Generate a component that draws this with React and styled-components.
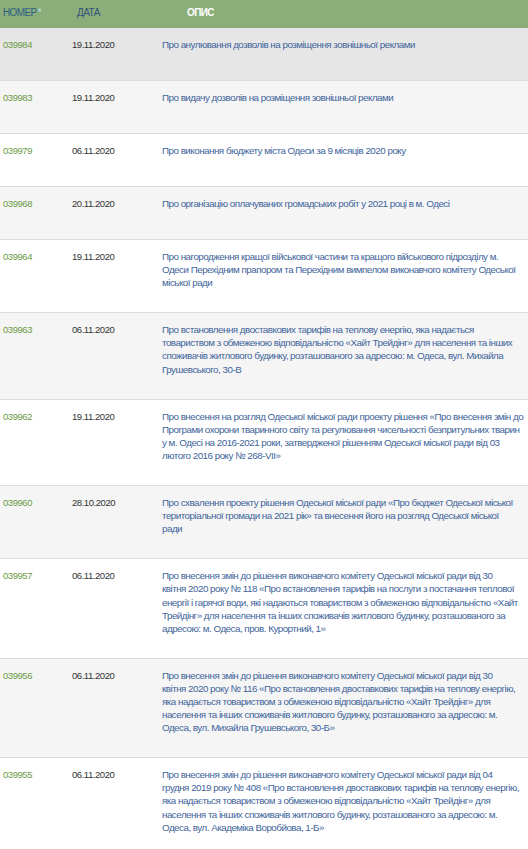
import React from "react";
import styled, { createGlobalStyle } from "styled-components";

const GlobalStyle = createGlobalStyle`
  body {
    margin: 0;
    background: #ffffff;
    font-family: "Liberation Sans", Arial, sans-serif;
  }
`;

const Table = styled.div`
  width: 528px;
  display: flex;
  flex-direction: column;
  overflow: hidden;
`;

const Head = styled.div`
  display: grid;
  grid-template-columns: 72px 90px 1fr;
  height: 28px;
  background-color: #8aad79;
  font-size: 10px;
  letter-spacing: -0.6px;
  line-height: 25px;
`;

const Th = styled.div`
  padding-left: ${(props) => props.pad || "3px"};
  color: ${(props) => props.color || "#2f5f84"};
  font-weight: ${(props) => (props.bold ? "bold" : "normal")};

  span {
    margin-left: 1px;
    color: #c4dcea;
  }
`;

const Row = styled.div`
  display: grid;
  grid-template-columns: 72px 90px 1fr;
  align-items: start;
  min-height: 53px;
  box-sizing: border-box;
  padding: 10px 0 23px;
  border-bottom: 1px solid #dcdcdc;
  background-color: ${(props) =>
    props.active ? "#e6e6e6" : props.odd ? "#f5f5f5" : "#ffffff"};
  line-height: 13.1px;
`;

const Num = styled.div`
  padding-left: 3px;
  font-size: 9.5px;
  letter-spacing: -0.45px;
  color: #6b9a46;
`;

const Date = styled.div`
  font-size: 9.5px;
  letter-spacing: -0.45px;
  color: #333333;
`;

const Desc = styled.div`
  font-size: 9.8px;
  letter-spacing: -0.5px;
  color: #41649a;
`;

const Line = styled.span`
  display: block;
  white-space: nowrap;
`;

const rows = [
  ["039984", "19.11.2020", ["Про анулювання дозволів на розміщення зовнішньої реклами"]],
  ["039983", "19.11.2020", ["Про видачу дозволів на розміщення зовнішньої реклами"]],
  ["039979", "06.11.2020", ["Про виконання бюджету міста Одеси за 9 місяців 2020 року"]],
  ["039968", "20.11.2020", ["Про організацію оплачуваних громадських робіт у 2021 році в м. Одесі"]],
  [
    "039964",
    "19.11.2020",
    [
      "Про нагородження кращої військової частини та кращого військового підрозділу м.",
      "Одеси Перехідним прапором та Перехідним вимпелом виконавчого комітету Одеської",
      "міської ради",
    ],
  ],
  [
    "039963",
    "06.11.2020",
    [
      "Про встановлення двоставкових тарифів на теплову енергію, яка надається",
      "товариством з обмеженою відповідальністю «Хайт Трейдінг» для населення та інших",
      "споживачів житлового будинку, розташованого за адресою: м. Одеса, вул. Михайла",
      "Грушевського, 30-В",
    ],
  ],
  [
    "039962",
    "19.11.2020",
    [
      "Про внесення на розгляд Одеської міської ради проекту рішення «Про внесення змін до",
      "Програми охорони тваринного світу та регулювання чисельності безпритульних тварин",
      "у м. Одесі на 2016-2021 роки, затвердженої рішенням Одеської міської ради від 03",
      "лютого 2016 року № 268-VII»",
    ],
  ],
  [
    "039960",
    "28.10.2020",
    [
      "Про схвалення проекту рішення Одеської міської ради «Про бюджет Одеської міської",
      "територіальної громади на 2021 рік» та внесення його на розгляд Одеської міської",
      "ради",
    ],
  ],
  [
    "039957",
    "06.11.2020",
    [
      "Про внесення змін до рішення виконавчого комітету Одеської міської ради від 30",
      "квітня 2020 року № 118 «Про встановлення тарифів на послуги з постачання теплової",
      "енергії і гарячої води, які надаються товариством з обмеженою відповідальністю «Хайт",
      "Трейдінг» для населення та інших споживачів житлового будинку, розташованого за",
      "адресою: м. Одеса, пров. Курортний, 1»",
    ],
  ],
  [
    "039956",
    "06.11.2020",
    [
      "Про внесення змін до рішення виконавчого комітету Одеської міської ради від 30",
      "квітня 2020 року № 116 «Про встановлення двоставкових тарифів на теплову енергію,",
      "яка надається товариством з обмеженою відповідальністю «Хайт Трейдінг» для",
      "населення та інших споживачів житлового будинку, розташованого за адресою: м.",
      "Одеса, вул. Михайла Грушевського, 30-Б»",
    ],
  ],
  [
    "039955",
    "06.11.2020",
    [
      "Про внесення змін до рішення виконавчого комітету Одеської міської ради від 04",
      "грудня 2019 року № 408 «Про встановлення двоставкових тарифів на теплову енергію,",
      "яка надається товариством з обмеженою відповідальністю «Хайт Трейдінг» для",
      "населення та інших споживачів житлового будинку, розташованого за адресою: м.",
      "Одеса, вул. Академіка Воробйова, 1-Б»",
    ],
  ],
];

const App = () => {
  return (
    <>
      <GlobalStyle />
      <Table>
        <Head>
          <Th>
            НОМЕР<span>*</span>
          </Th>
          <Th color="#34557c" pad="5px">ДАТА</Th>
          <Th color="#ffffff" pad="25px" bold>ОПИС</Th>
        </Head>
        {rows.map(([num, date, lines], i) => (
          <Row key={num} active={i === 0} odd={i % 2 === 1}>
            <Num>{num}</Num>
            <Date>{date}</Date>
            <Desc>
              {lines.map((line) => (
                <Line key={line}>{line}</Line>
              ))}
            </Desc>
          </Row>
        ))}
      </Table>
    </>
  );
};

export default App;
